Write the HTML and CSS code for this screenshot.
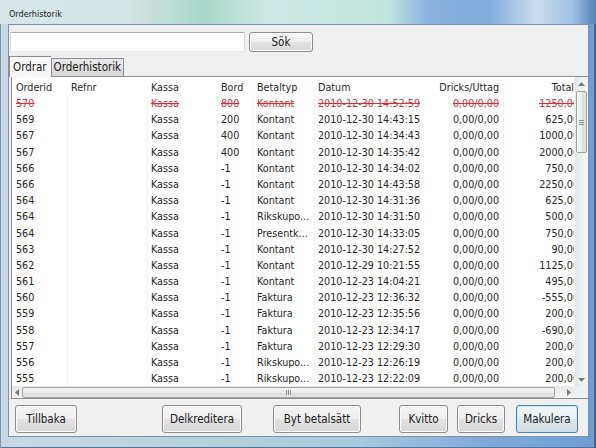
FILE: index.html
```html
<!DOCTYPE html>
<html lang="sv">
<head>
<meta charset="utf-8">
<title>Orderhistorik</title>
<link rel="stylesheet" href="styles.css">
</head>
<body>
<div class="window">
  <div class="titlebar"><span class="title">Orderhistorik</span></div>
  <div class="client">
    <div class="search-row">
      <div class="search-input"></div>
      <button class="btn btn-sok">Sök</button>
    </div>
    <div class="tabs">
      <div class="tab tab-active">Ordrar</div>
      <div class="tab">Orderhistorik</div>
    </div>
    <div class="panel">
      <div class="grid-main">
        <div class="grid-view">
          <div class="row hdr">
            <div class="c">Orderid</div><div class="c">Refnr</div><div class="c">Kassa</div><div class="c">Bord</div><div class="c">Betaltyp</div><div class="c">Datum</div><div class="c r">Dricks/Uttag</div><div class="c r tot-h">Total</div>
          </div>
          <div class="body">
            <div class="row void"><div class="c">570</div><div class="c"></div><div class="c">Kassa</div><div class="c">800</div><div class="c">Kontant</div><div class="c">2010-12-30 14:52:59</div><div class="c r">0,00/0,00</div><div class="c r">1250,00</div></div>
            <div class="row"><div class="c">569</div><div class="c"></div><div class="c">Kassa</div><div class="c">200</div><div class="c">Kontant</div><div class="c">2010-12-30 14:43:15</div><div class="c r">0,00/0,00</div><div class="c r">625,00</div></div>
            <div class="row"><div class="c">567</div><div class="c"></div><div class="c">Kassa</div><div class="c">400</div><div class="c">Kontant</div><div class="c">2010-12-30 14:34:43</div><div class="c r">0,00/0,00</div><div class="c r">1000,00</div></div>
            <div class="row"><div class="c">567</div><div class="c"></div><div class="c">Kassa</div><div class="c">400</div><div class="c">Kontant</div><div class="c">2010-12-30 14:35:42</div><div class="c r">0,00/0,00</div><div class="c r">2000,00</div></div>
            <div class="row"><div class="c">566</div><div class="c"></div><div class="c">Kassa</div><div class="c">-1</div><div class="c">Kontant</div><div class="c">2010-12-30 14:34:02</div><div class="c r">0,00/0,00</div><div class="c r">750,00</div></div>
            <div class="row"><div class="c">566</div><div class="c"></div><div class="c">Kassa</div><div class="c">-1</div><div class="c">Kontant</div><div class="c">2010-12-30 14:43:58</div><div class="c r">0,00/0,00</div><div class="c r">2250,00</div></div>
            <div class="row"><div class="c">564</div><div class="c"></div><div class="c">Kassa</div><div class="c">-1</div><div class="c">Kontant</div><div class="c">2010-12-30 14:31:36</div><div class="c r">0,00/0,00</div><div class="c r">625,00</div></div>
            <div class="row"><div class="c">564</div><div class="c"></div><div class="c">Kassa</div><div class="c">-1</div><div class="c">Rikskupo...</div><div class="c">2010-12-30 14:31:50</div><div class="c r">0,00/0,00</div><div class="c r">500,00</div></div>
            <div class="row"><div class="c">564</div><div class="c"></div><div class="c">Kassa</div><div class="c">-1</div><div class="c">Presentk...</div><div class="c">2010-12-30 14:33:05</div><div class="c r">0,00/0,00</div><div class="c r">750,00</div></div>
            <div class="row"><div class="c">563</div><div class="c"></div><div class="c">Kassa</div><div class="c">-1</div><div class="c">Kontant</div><div class="c">2010-12-30 14:27:52</div><div class="c r">0,00/0,00</div><div class="c r">90,00</div></div>
            <div class="row"><div class="c">562</div><div class="c"></div><div class="c">Kassa</div><div class="c">-1</div><div class="c">Kontant</div><div class="c">2010-12-29 10:21:55</div><div class="c r">0,00/0,00</div><div class="c r">1125,00</div></div>
            <div class="row"><div class="c">561</div><div class="c"></div><div class="c">Kassa</div><div class="c">-1</div><div class="c">Kontant</div><div class="c">2010-12-23 14:04:21</div><div class="c r">0,00/0,00</div><div class="c r">495,00</div></div>
            <div class="row"><div class="c">560</div><div class="c"></div><div class="c">Kassa</div><div class="c">-1</div><div class="c">Faktura</div><div class="c">2010-12-23 12:36:32</div><div class="c r">0,00/0,00</div><div class="c r">-555,00</div></div>
            <div class="row"><div class="c">559</div><div class="c"></div><div class="c">Kassa</div><div class="c">-1</div><div class="c">Faktura</div><div class="c">2010-12-23 12:35:56</div><div class="c r">0,00/0,00</div><div class="c r">200,00</div></div>
            <div class="row"><div class="c">558</div><div class="c"></div><div class="c">Kassa</div><div class="c">-1</div><div class="c">Faktura</div><div class="c">2010-12-23 12:34:17</div><div class="c r">0,00/0,00</div><div class="c r">-690,00</div></div>
            <div class="row"><div class="c">557</div><div class="c"></div><div class="c">Kassa</div><div class="c">-1</div><div class="c">Faktura</div><div class="c">2010-12-23 12:29:30</div><div class="c r">0,00/0,00</div><div class="c r">200,00</div></div>
            <div class="row"><div class="c">556</div><div class="c"></div><div class="c">Kassa</div><div class="c">-1</div><div class="c">Rikskupo...</div><div class="c">2010-12-23 12:26:19</div><div class="c r">0,00/0,00</div><div class="c r">200,00</div></div>
            <div class="row"><div class="c">555</div><div class="c"></div><div class="c">Kassa</div><div class="c">-1</div><div class="c">Rikskupo...</div><div class="c">2010-12-23 12:22:09</div><div class="c r">0,00/0,00</div><div class="c r">200,00</div></div>
          </div>
        </div>
        <div class="vscroll">
          <div class="sb-btn sb-up"><svg width="7" height="4" viewBox="0 0 7 4"><path d="M0 4 L3.5 0 L7 4 Z" fill="#7a7a7a"/></svg></div>
          <div class="vthumb"><span class="grip-h"></span></div>
          <div class="sb-fill"></div>
          <div class="sb-btn sb-down"><svg width="7" height="4" viewBox="0 0 7 4"><path d="M0 0 L3.5 4 L7 0 Z" fill="#7a7a7a"/></svg></div>
        </div>
      </div>
      <div class="hrow">
        <div class="hscroll">
          <div class="sb-btn sb-left"><svg width="4" height="7" viewBox="0 0 4 7"><path d="M4 0 L0 3.5 L4 7 Z" fill="#7a7a7a"/></svg></div>
          <div class="hthumb"><span class="grip-v"></span></div>
          <div class="sb-fill"></div>
          <div class="sb-btn sb-right"><svg width="4" height="7" viewBox="0 0 4 7"><path d="M0 0 L4 3.5 L0 7 Z" fill="#7a7a7a"/></svg></div>
        </div>
        <div class="corner"></div>
      </div>
    </div>
    <div class="buttons">
      <div class="grp grp-left"><button class="btn w-tillbaka">Tillbaka</button></div>
      <div class="grp grp-mid"><button class="btn w-delk">Delkreditera</button><button class="btn w-byt">Byt betalsätt</button></div>
      <div class="grp grp-right"><button class="btn w-kvitto">Kvitto</button><button class="btn w-dricks">Dricks</button><button class="btn btn-default w-mak">Makulera</button></div>
    </div>
  </div>
</div>
</body>
</html>
```

FILE: styles.css
```css
html, body {
  margin: 0;
  padding: 0;
}
body {
  width: 596px;
  height: 448px;
  overflow: hidden;
  font-family: "DejaVu Sans Condensed", "DejaVu Sans", sans-serif;
  font-stretch: condensed;
  color: #262626;
}
.window {
  width: 596px;
  height: 448px;
  box-sizing: border-box;
  display: flex;
  flex-direction: column;
  padding: 0 7px 11px 8px;
  background: linear-gradient(to right, #c8d9e3 0%, #b9d3da 30%, #a9cade 60%, #82abdb 80%, #6f9cd4 100%);
  box-shadow: inset 1px 0 0 #7e93a2, inset -2px 0 0 #46668c, inset 0 -1px 0 #4f739d;
}
.titlebar {
  height: 24px;
  flex: none;
  margin: 0 -7px 0 -8px;
  padding-left: 9px;
  display: flex;
  align-items: center;
  background: linear-gradient(to right, #d9e6e8 0%, #d2e4e3 22%, #aad8c9 34%, #cde8e4 45%, #c2e6de 65%, #8bb1e0 72%, #82acdd 82%, #cadded 90%, #a0c2e6 96%, #557fb0 100%);
}
.title {
  font-size: 9px;
  color: #1c1c1c;
  padding-top: 4px;
}
.client {
  flex: 1;
  display: flex;
  flex-direction: column;
  background: #f0f0f0;
  border: 1px solid #7a93ad;
  padding: 0 0 3px 0;
  min-height: 0;
}
.search-row {
  display: flex;
  margin-top: 7px;
  padding-left: 1px;
  height: 20px;
  gap: 4px;
}
.search-input {
  width: 233px;
  height: 18px;
  background: #fff;
  border: 1px solid #abadb3;
  border-left-color: #dcdde2;
  border-right-color: #dcdde2;
  border-bottom-color: #e3e9ef;
}
.btn {
  font-family: inherit;
  font-stretch: condensed;
  font-size: 11.5px;
  color: #222;
  background: linear-gradient(#f6f6f6 0%, #eeeeee 48%, #e2e2e2 52%, #d9d9d9 100%);
  border: 1px solid #8d8d8d;
  border-radius: 3px;
  box-shadow: inset 0 0 0 1px #fbfbfb;
  padding: 0;
  height: 28px;
}
.btn-sok {
  width: 64px;
  height: 20px;
}
.tabs {
  display: flex;
  align-items: flex-end;
  margin-top: 4px;
  height: 20px;
  position: relative;
  z-index: 1;
}
.tab {
  font-size: 11.5px;
  height: 17px;
  line-height: 17px;
  padding: 0 2px;
  border: 1px solid #8c8e94;
  border-bottom: none;
  background: linear-gradient(#e9e9e9, #d6d6d6);
  color: #1a1a1a;
}
.tab-active {
  height: 20px;
  line-height: 21px;
  padding: 0 4px 0 3px;
  background: #f8f8f8;
  margin-bottom: -1px;
  border-right: none;
}
.panel {
  height: 321px;
  flex: none;
  margin-left: 2px;
  border: 1px solid #8c8e94;
  border-right: none;
  display: flex;
  flex-direction: column;
  background: #fff;
}
.grid-main {
  flex: 1;
  display: flex;
  min-height: 0;
}
.grid-view {
  flex: 1;
  overflow: hidden;
  display: flex;
  flex-direction: column;
  font-size: 10.7px;
}
.row {
  display: grid;
  grid-template-columns: 56px 80px 70px 36px 61px 105px 84px 78px;
  height: 16.2px;
  line-height: 16px;
  white-space: nowrap;
}
.c {
  padding-left: 3px;
  overflow: hidden;
  box-shadow: inset -1px 0 0 #f3f3f3;
}
.c:first-child {
  padding-left: 4px;
}
.c.r {
  text-align: right;
  padding-left: 0;
  padding-right: 5px;
}
.row .c:last-child {
  padding-right: 3px;
  box-shadow: none;
  overflow: visible;
}
.hdr {
  height: 19px;
  padding-top: 3px;
  box-sizing: border-box;
  flex: none;
  color: #2a2a2a;
}
.hdr .c {
  box-shadow: none;
}
.hdr .tot-h {
  padding-right: 8px !important;
}
.body {
  flex: 1;
  overflow: hidden;
}
.void {
  color: #d5303c;
  text-decoration: line-through;
}
.vscroll {
  width: 13px;
  flex: none;
  display: flex;
  flex-direction: column;
  background: linear-gradient(to right, #e7e7e7, #f5f5f5);
  border-left: 1px solid #f6f6f6;
}
.sb-btn {
  display: flex;
  align-items: center;
  justify-content: center;
  flex: none;
}
.sb-up {
  height: 13px;
}
.sb-down {
  height: 13px;
}
.vthumb {
  height: 60px;
  margin: 1px 1px 0 1px;
  border: 1px solid #a2a2a2;
  border-radius: 2px;
  background: linear-gradient(to right, #f6f6f6 0%, #ebebeb 50%, #dcdcdc 51%, #e5e5e5 100%);
  display: flex;
  align-items: center;
  justify-content: center;
  flex: none;
}
.grip-h {
  width: 5px;
  height: 5px;
  background: repeating-linear-gradient(#8f8f8f 0 1px, transparent 1px 2px);
}
.sb-fill {
  flex: 1;
}
.hrow {
  height: 12px;
  flex: none;
  display: flex;
}
.hscroll {
  flex: 1;
  display: flex;
  background: linear-gradient(#e7e7e7, #f5f5f5);
}
.sb-left {
  width: 10px;
}
.sb-right {
  width: 11px;
}
.hthumb {
  width: 531px;
  margin: 1px 0 0 0;
  border: 1px solid #a2a2a2;
  border-radius: 2px;
  background: linear-gradient(#f6f6f6 0%, #ebebeb 50%, #dcdcdc 51%, #e5e5e5 100%);
  display: flex;
  align-items: center;
  justify-content: center;
  flex: none;
}
.grip-v {
  width: 5px;
  height: 5px;
  background: repeating-linear-gradient(to right, #8f8f8f 0 1px, transparent 1px 2px);
}
.corner {
  width: 14px;
  background: #f0f0f0;
}
.buttons {
  display: flex;
  margin-top: 6px;
  padding-left: 6px;
  height: 28px;
}
.grp {
  display: flex;
}
.grp-mid {
  margin-left: 85px;
  gap: 31px;
}
.grp-right {
  margin-left: 38px;
  gap: 9px;
}
.w-tillbaka { width: 62px; }
.w-delk { width: 80px; }
.w-byt { width: 88px; }
.w-kvitto { width: 49px; }
.w-dricks { width: 48px; margin-right: 2px; }
.w-mak { width: 62px; }
.btn-default {
  border-color: #4584b4;
  box-shadow: inset 0 0 0 1px #c4e6f7;
  background: linear-gradient(#f3f7f9 0%, #e9eff3 48%, #dde5ea 52%, #d5dee4 100%);
}
```
